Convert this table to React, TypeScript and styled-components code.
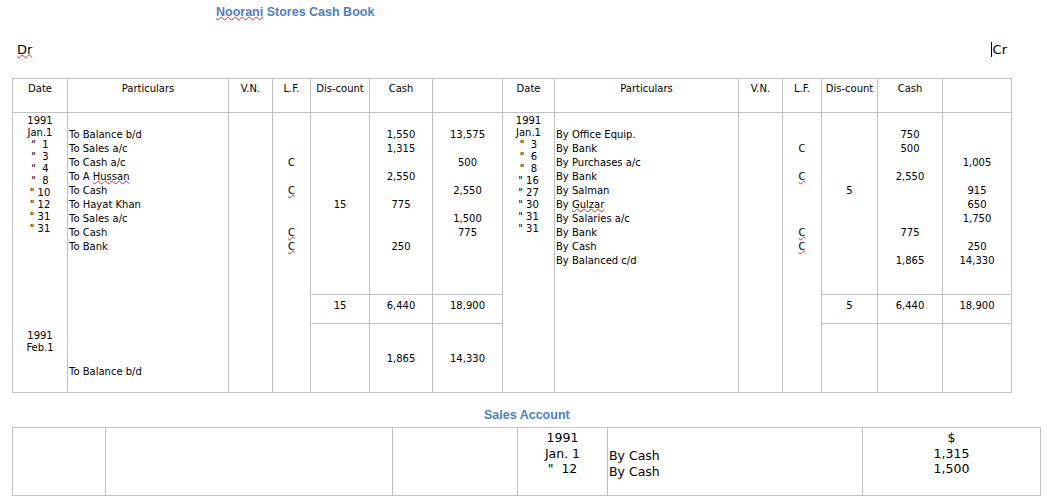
import React from 'react';
import styled, { createGlobalStyle } from 'styled-components';

const LINE = '#bfbfc4';

const Global = createGlobalStyle`
  html, body { margin: 0; padding: 0; background: #ffffff; }
  body { font-family: "DejaVu Sans", Verdana, sans-serif; color: #000; }
`;

const Page = styled.div`
  width: 1047px;
  height: 502px;
  overflow: hidden;
  box-sizing: border-box;
  padding-left: 12px;
  display: flex;
  flex-direction: column;
  align-items: flex-start;
`;

const Heading = styled.h1<{ $indent: number; $top: number }>`
  margin: ${(p) => p.$top}px 0 0 0;
  padding-left: ${(p) => p.$indent}px;
  font-family: "Liberation Sans", Arial, sans-serif;
  font-weight: bold;
  font-size: 12.5px;
  line-height: 16px;
  color: #4f81bd;
`;

const Spell = styled.span`
  text-decoration-line: underline;
  text-decoration-style: wavy;
  text-decoration-color: #e0302a;
  text-decoration-thickness: 1px;
  text-underline-offset: 0px;
  text-decoration-skip-ink: none;
`;

const SideRow = styled.div`
  width: 1000px;
  box-sizing: border-box;
  margin-top: 22px;
  padding: 0 5px;
  display: flex;
  justify-content: space-between;
  font-size: 13px;
  line-height: 16px;
`;

const Caret = styled.span`
  display: inline-block;
  width: 1px;
  height: 15px;
  background: #000;
  vertical-align: -3px;
  margin-right: 1px;
`;

const Ledger = styled.div`
  margin-top: 20px;
  display: grid;
  grid-template-columns: 54px 160px 43px 37px 58px 62px 69px 51px 183px 43px 38px 55px 64px 68px;
  grid-template-rows: 33px 181px 28px 68px;
  gap: 1px;
  background: ${LINE};
  border: 1px solid ${LINE};
  font-size: 10px;
`;

const HeadCell = styled.div`
  background: #fff;
  text-align: center;
  padding-top: 4px;
  line-height: 12px;
`;

const Cell = styled.div<{ $span?: boolean; $left?: boolean; $pt?: number }>`
  background: #fff;
  grid-row: ${(p) => (p.$span ? 'span 3' : 'auto')};
  display: flex;
  flex-direction: column;
  text-align: ${(p) => (p.$left ? 'left' : 'center')};
  padding-top: ${(p) => p.$pt ?? 0}px;
  padding-left: ${(p) => (p.$left ? 1 : 0)}px;
  white-space: pre;
  line-height: 14px;
`;

const Line = styled.div`
  height: 14px;
`;

const DateGroup = styled.div<{ $top: number }>`
  margin-top: ${(p) => p.$top}px;
`;

const DateLine = styled.div`
  height: 12px;
  line-height: 12px;
`;

const BottomLine = styled.div`
  margin-top: auto;
  padding-bottom: 13px;
  line-height: 14px;
`;

const SalesGrid = styled.div`
  margin-top: 4px;
  display: grid;
  grid-template-columns: 92px 286px 124px 89px 254px 177px;
  grid-template-rows: 67px;
  gap: 1px;
  background: ${LINE};
  border: 1px solid ${LINE};
  font-size: 12.5px;
`;

const SalesCell = styled.div<{ $left?: boolean; $pt?: number; $lh?: number }>`
  background: #fff;
  white-space: pre;
  text-align: ${(p) => (p.$left ? 'left' : 'center')};
  padding-top: ${(p) => p.$pt ?? 0}px;
  padding-left: ${(p) => (p.$left ? 1 : 0)}px;
  line-height: ${(p) => p.$lh ?? 15.5}px;
`;

type Side = {
  dates: string[];
  dates2: string[];
  particulars: React.ReactNode[];
  bottomParticular: string;
  lf: React.ReactNode[];
  dis: string[];
  cash: string[];
  blank: string[];
  totals: [string, string, string];
  final: [string, string, string];
};

const sq = (t: string) => <Spell>{t}</Spell>;

const left: Side = {
  dates: ['1991', 'Jan.1', '"  1', '"  3', '"  4', '"  8', '" 10', '" 12', '" 31', '" 31'],
  dates2: ['1991', 'Feb.1'],
  particulars: [
    'To Balance b/d',
    'To Sales a/c',
    'To Cash a/c',
    <>To A {sq('Hussan')}</>,
    'To Cash',
    'To Hayat Khan',
    'To Sales a/c',
    'To Cash',
    'To Bank',
  ],
  bottomParticular: 'To Balance b/d',
  lf: ['', '', 'C', '', sq('C'), '', '', sq('C'), sq('C')],
  dis: ['', '', '', '', '', '15'],
  cash: ['1,550', '1,315', '', '2,550', '', '775', '', '', '250'],
  blank: ['13,575', '', '500', '', '2,550', '', '1,500', '775'],
  totals: ['15', '6,440', '18,900'],
  final: ['', '1,865', '14,330'],
};

const right: Side = {
  dates: ['1991', 'Jan.1', '"  3', '"  6', '"  8', '" 16', '" 27', '" 30', '" 31', '" 31'],
  dates2: [],
  particulars: [
    'By Office Equip.',
    'By Bank',
    'By Purchases a/c',
    'By Bank',
    'By Salman',
    <>By {sq('Gulzar')}</>,
    'By Salaries a/c',
    'By Bank',
    'By Cash',
    'By Balanced c/d',
  ],
  bottomParticular: '',
  lf: ['', 'C', '', sq('C'), '', '', '', sq('C'), sq('C')],
  dis: ['', '', '', '', '5'],
  cash: ['750', '500', '', '2,550', '', '', '', '775', '', '1,865'],
  blank: ['', '', '1,005', '', '915', '650', '1,750', '', '250', '14,330'],
  totals: ['5', '6,440', '18,900'],
  final: ['', '', ''],
};

const headers = ['Date', 'Particulars', 'V.N.', 'L.F.', 'Dis-count', 'Cash', ''];

const Lines = ({ items }: { items: React.ReactNode[] }) => (
  <>
    {items.map((t, i) => (
      <Line key={i}>{t}</Line>
    ))}
  </>
);

const SideBody = ({ s }: { s: Side }) => (
  <>
    <Cell $span $pt={2}>
      <DateGroup $top={0}>
        {s.dates.map((d, i) => (
          <DateLine key={i}>{d}</DateLine>
        ))}
      </DateGroup>
      {s.dates2.length > 0 && (
        <DateGroup $top={95}>
          {s.dates2.map((d, i) => (
            <DateLine key={i}>{d}</DateLine>
          ))}
        </DateGroup>
      )}
    </Cell>
    <Cell $span $left $pt={15}>
      <Lines items={s.particulars} />
      {s.bottomParticular && <BottomLine>{s.bottomParticular}</BottomLine>}
    </Cell>
    <Cell $span />
    <Cell $span $pt={15}>
      <Lines items={s.lf} />
    </Cell>
    <Cell $pt={15}>
      <Lines items={s.dis} />
    </Cell>
    <Cell $pt={15}>
      <Lines items={s.cash} />
    </Cell>
    <Cell $pt={15}>
      <Lines items={s.blank} />
    </Cell>
  </>
);

const Totals = ({ s }: { s: Side }) => (
  <>
    {s.totals.map((t, i) => (
      <Cell key={i} $pt={4}>
        {t}
      </Cell>
    ))}
  </>
);

const Finals = ({ s }: { s: Side }) => (
  <>
    {s.final.map((t, i) => (
      <Cell key={i} $pt={28}>
        {t}
      </Cell>
    ))}
  </>
);

export default function App() {
  return (
    <>
      <Global />
      <Page>
        <Heading $indent={204} $top={4}>
          {sq('Noorani')} Stores Cash Book
        </Heading>
        <SideRow>
          <span>{sq('Dr')}</span>
          <span>
            <Caret />
            Cr
          </span>
        </SideRow>
        <Ledger>
          {headers.map((h, i) => (
            <HeadCell key={'l' + i}>{h}</HeadCell>
          ))}
          {headers.map((h, i) => (
            <HeadCell key={'r' + i}>{h}</HeadCell>
          ))}
          <SideBody s={left} />
          <SideBody s={right} />
          <Totals s={left} />
          <Totals s={right} />
          <Finals s={left} />
          <Finals s={right} />
        </Ledger>
        <Heading $indent={472} $top={14}>
          Sales Account
        </Heading>
        <SalesGrid>
          <SalesCell />
          <SalesCell />
          <SalesCell />
          <SalesCell $pt={2}>{'1991\nJan. 1\n"  12'}</SalesCell>
          <SalesCell $left $pt={20} $lh={16}>
            {'By Cash\nBy Cash'}
          </SalesCell>
          <SalesCell $pt={2}>{'$\n1,315\n1,500'}</SalesCell>
        </SalesGrid>
      </Page>
    </>
  );
}
